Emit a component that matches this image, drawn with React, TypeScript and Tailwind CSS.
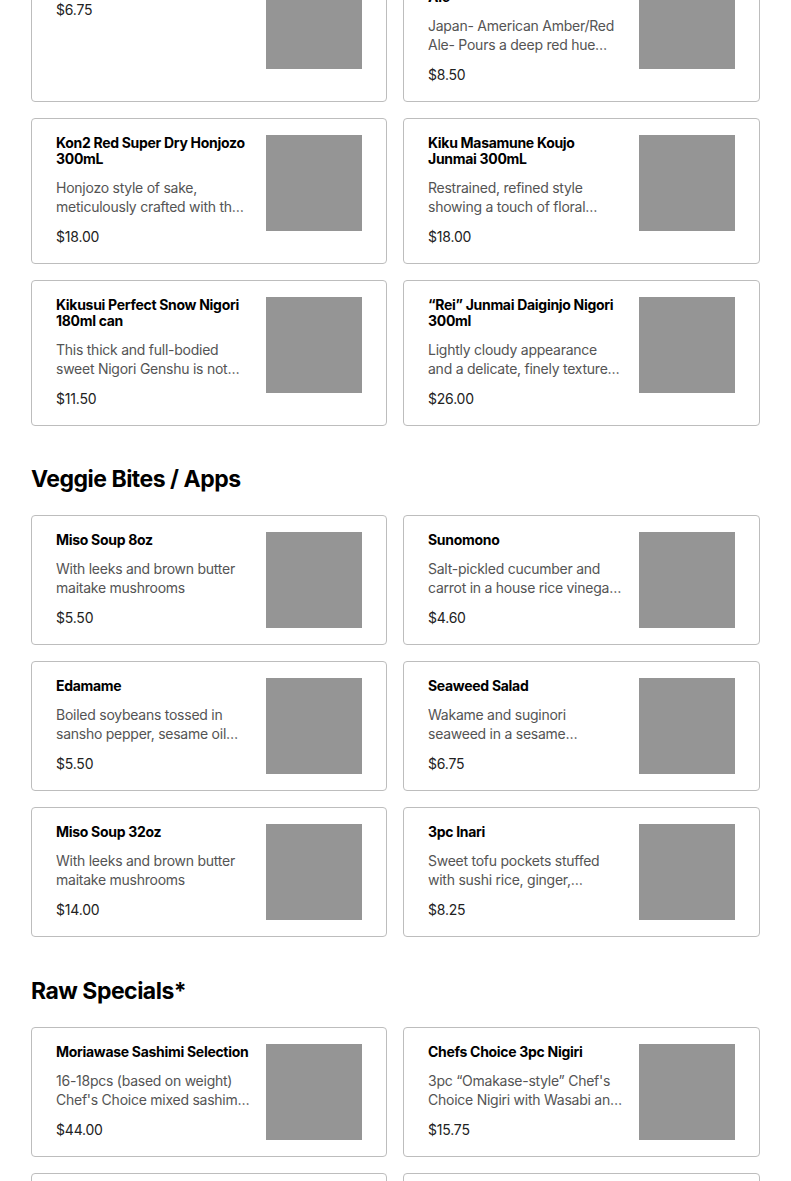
type Item = { name: string; desc?: string; price: string };

const drinks: Item[] = [
  { name: "Sapporo Premium 12oz", price: "$6.75" },
  {
    name: "Kinshachi Nagoya Akamiso Ale",
    desc: "Japan- American Amber/Red Ale- Pours a deep red hue with a creamy head",
    price: "$8.50",
  },
  {
    name: "Kon2 Red Super Dry Honjozo 300mL",
    desc: "Honjozo style of sake, meticulously crafted with the finest rice and water",
    price: "$18.00",
  },
  {
    name: "Kiku Masamune Koujo Junmai 300mL",
    desc: "Restrained, refined style showing a touch of floral aromas and a dry finish",
    price: "$18.00",
  },
  {
    name: "Kikusui Perfect Snow Nigori 180ml can",
    desc: "This thick and full-bodied sweet Nigori Genshu is not overwhelmingly sweet",
    price: "$11.50",
  },
  {
    name: "\u201CRei\u201D Junmai Daiginjo Nigori 300ml",
    desc: "Lightly cloudy appearance and a delicate, finely textured body",
    price: "$26.00",
  },
];

const veggie: Item[] = [
  { name: "Miso Soup 8oz", desc: "With leeks and brown butter maitake mushrooms", price: "$5.50" },
  {
    name: "Sunomono",
    desc: "Salt-pickled cucumber and carrot in a house rice vinegar dressing",
    price: "$4.60",
  },
  {
    name: "Edamame",
    desc: "Boiled soybeans tossed in sansho pepper, sesame oil and sea salt",
    price: "$5.50",
  },
  {
    name: "Seaweed Salad",
    desc: "Wakame and suginori seaweed in a sesame vinaigrette",
    price: "$6.75",
  },
  { name: "Miso Soup 32oz", desc: "With leeks and brown butter maitake mushrooms", price: "$14.00" },
  {
    name: "3pc Inari",
    desc: "Sweet tofu pockets stuffed with sushi rice, ginger, scallions and sesame",
    price: "$8.25",
  },
];

const raw: Item[] = [
  {
    name: "Moriawase Sashimi Selection",
    desc: "16-18pcs (based on weight) Chef's Choice mixed sashimi selection",
    price: "$44.00",
  },
  {
    name: "Chefs Choice 3pc Nigiri",
    desc: "3pc \u201COmakase-style\u201D Chef's Choice Nigiri with Wasabi and Ginger",
    price: "$15.75",
  },
  { name: "Salmon Sashimi", desc: "Five pieces of fresh salmon", price: "$14.00" },
  { name: "Tuna Sashimi", desc: "Five pieces of fresh tuna", price: "$16.00" },
];

function ItemCard({ item }: { item: Item }) {
  return (
    <div className="flex gap-4 rounded border border-[#bdbdbd] bg-white px-6 py-4">
      <div className="flex min-w-0 flex-1 flex-col">
        <h3 className="text-[14px] font-bold leading-4 tracking-[-0.3px] text-black">{item.name}</h3>
        {item.desc && (
          <p className="mt-3 line-clamp-2 text-[14px] leading-[18.5px] tracking-[-0.25px] text-[#545454]">
            {item.desc}
          </p>
        )}
        <p className="mt-[11px] text-[14px] leading-5 tracking-[-0.2px] text-[#222]">{item.price}</p>
      </div>
      <div className="h-24 w-24 shrink-0 bg-[#959595]" />
    </div>
  );
}

function Grid({ items, className = "" }: { items: Item[]; className?: string }) {
  return (
    <div className={`grid grid-cols-[356px_357px] gap-4 ${className}`}>
      {items.map((it, i) => (
        <ItemCard key={i} item={it} />
      ))}
    </div>
  );
}

export default function App() {
  return (
    <div
      className="min-h-[1181px] overflow-hidden bg-white px-[31px]"
      style={{ fontFamily: "Inter, 'Noto Sans', sans-serif" }}
    >
      <Grid items={drinks} className="-mt-[44px]" />

      <h2 className="mt-[37px] mb-5 text-[23px] font-bold leading-8 tracking-[-0.5px] text-black">
        Veggie Bites / Apps
      </h2>
      <Grid items={veggie} />

      <h2 className="mt-[38px] mb-5 text-[23px] font-bold leading-8 tracking-[-0.5px] text-black">
        Raw Specials*
      </h2>
      <Grid items={raw} />
    </div>
  );
}
